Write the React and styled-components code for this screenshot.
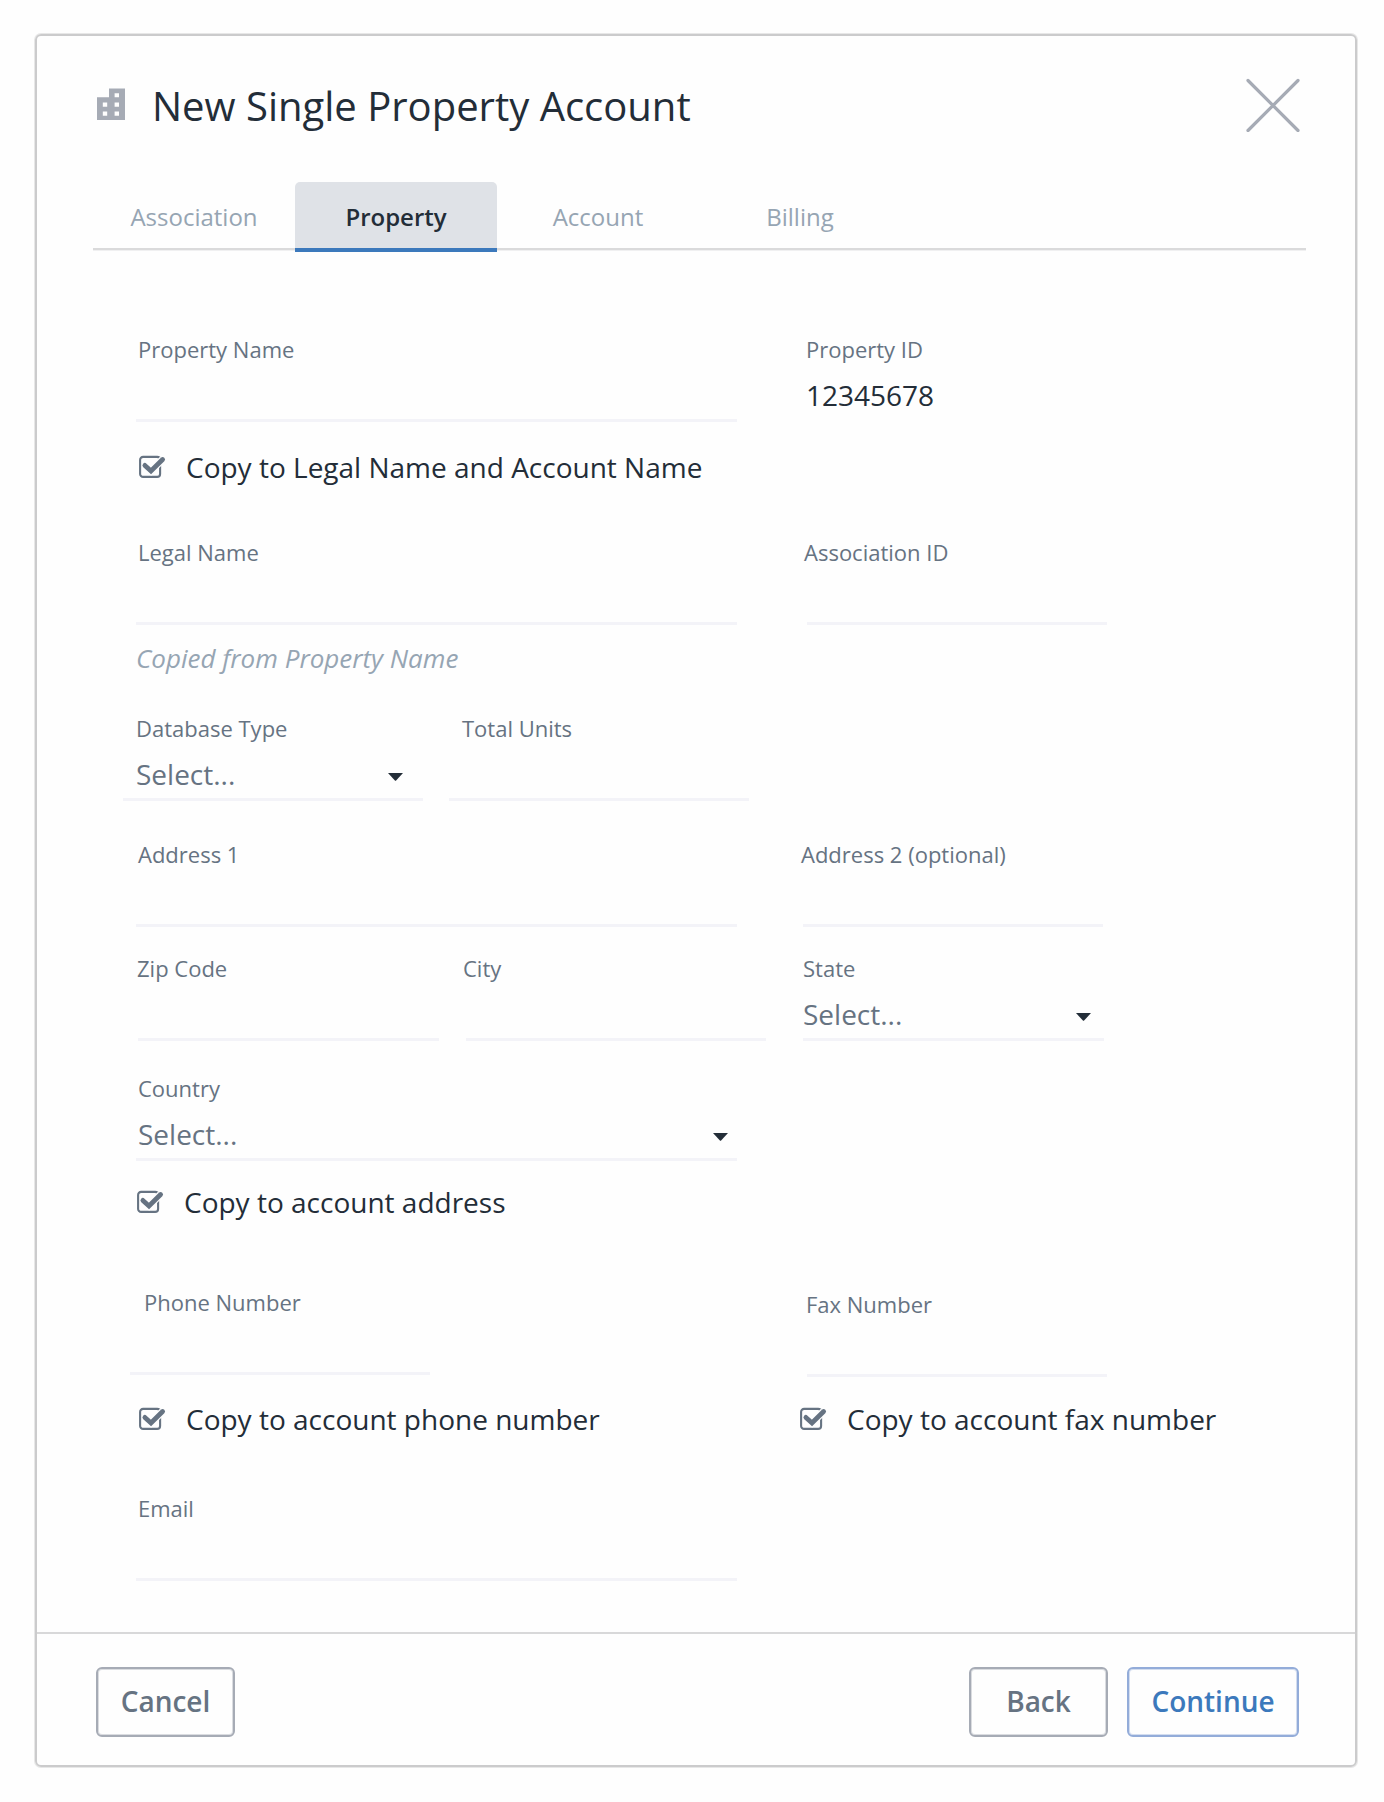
import React, { useState } from "react";
import styled, { createGlobalStyle, css } from "styled-components";

const ink = "#232d38";
const slate = "#667382";
const mist = "#96a5b3";
const steel = "#a6abb5";
const blue = "#3c79bc";
const rule = "#f3f3f8";

const GlobalStyle = createGlobalStyle`
  *, *::before, *::after { box-sizing: border-box; }
  body { margin: 0; background: #fefefe; font-family: "Open Sans", "Noto Sans", sans-serif; color: ${ink}; }
  button, input { font: inherit; color: inherit; }
`;

const Page = styled.div`
  min-height: 1802px;
  padding: 34px 27px 35px 35px;
`;

const Dialog = styled.section`
  display: flex;
  flex-direction: column;
  height: 1733px;
  border: 2px solid #cbcbcc;
  border-radius: 6px;
  box-shadow: 0 0 0 1px rgba(203, 203, 204, 0.45);
`;

const Header = styled.header`
  display: flex;
  align-items: flex-start;
  height: 146px;
  padding: 42px 55px 0 60px;
`;

const TitleIcon = styled.svg`
  width: 28px;
  height: 32px;
  margin-top: 10px;
`;

const Title = styled.h1`
  flex: 1;
  margin: 0 0 0 27px;
  font-size: 40px;
  line-height: 55px;
  font-weight: 400;
`;

const CloseButton = styled.button`
  width: 54px;
  height: 54px;
  padding: 0;
  border: 0;
  background: none;
  svg { display: block; }
`;

const Tabs = styled.nav`
  display: flex;
  flex: none;
  height: 70px;
  margin: 0 49px 0 56px;
  background:
    linear-gradient(#dadadb, #dadadb) 0 66px / 100% 2px no-repeat,
    linear-gradient(#f0f0f1, #f0f0f1) 0 68px / 100% 1px no-repeat;
`;

const Tab = styled.button`
  flex: none;
  width: 202px;
  height: 70px;
  padding: 0 0 1px;
  border: 0;
  background: none;
  font-size: 24px;
  line-height: 33px;
  color: ${mist};
  ${(p) =>
    p.$active &&
    css`
      padding: 3px 0 0;
      border-bottom: 4px solid ${blue};
      border-radius: 5px 5px 0 0;
      background: #dfe2e7;
      color: ${ink};
      font-weight: 600;
    `}
`;

const Form = styled.form`
  display: flex;
  flex-direction: column;
  flex: 1;
  padding: 82px 0 0 99px;
`;

const Row = styled.div`
  display: flex;
  align-items: flex-start;
  margin-bottom: ${(p) => p.$after || 0}px;
`;

const FieldBox = styled.label`
  display: flex;
  flex-direction: column;
  width: ${(p) => p.$width}px;
  height: 88px;
  margin-left: ${(p) => p.$before || 0}px;
  margin-top: ${(p) => p.$drop || 0}px;
  margin-bottom: ${(p) => -(p.$drop || 0)}px;
  border-bottom: 3px solid ${(p) => (p.$plain ? "transparent" : rule)};
`;

const Label = styled.span`
  margin-left: ${(p) => p.$indent || 0}px;
  font-size: 22px;
  line-height: 30px;
  color: ${slate};
  white-space: nowrap;
`;

const Input = styled.input`
  width: 100%;
  height: 55px;
  padding: 12px 0 5px;
  border: 0;
  outline: 0;
  background: none;
  font-size: 28px;
  line-height: 38px;
`;

const Value = styled.span`
  display: flex;
  justify-content: space-between;
  padding: 12px 12px 5px ${(p) => p.$indent || 0}px;
  font-size: 28px;
  line-height: 38px;
  color: ${(p) => (p.$muted ? slate : ink)};
`;

const Caret = styled.svg`
  width: 15px;
  height: 8px;
  margin-top: 18px;
  margin-right: ${(p) => p.$inset || 0}px;
`;

const Hint = styled.p`
  margin: 0 0 37px;
  padding-top: 15px;
  font-size: 26px;
  line-height: 36px;
  font-style: italic;
  color: ${mist};
`;

const Check = styled.button`
  display: flex;
  align-items: flex-start;
  gap: 20px;
  margin-left: ${(p) => p.$before || 0}px;
  width: ${(p) => p.$width || "auto"};
  padding: 0;
  border: 0;
  background: none;
  font-size: 28px;
  line-height: 38px;
  color: ${ink};
  white-space: nowrap;
  svg { flex: none; margin-top: 7px; }
`;

const Footer = styled.footer`
  display: flex;
  gap: 19px;
  height: 133px;
  padding: 33px 56px 0 59px;
  border-top: 2px solid #d8d8d9;
`;

const Button = styled.button`
  width: ${(p) => (p.$primary ? 172 : 139)}px;
  height: 70px;
  padding: 0 0 2px;
  border: 2px solid ${(p) => (p.$primary ? "#93acd9" : steel)};
  border-radius: 6px;
  box-shadow: inset 0 0 0 1px ${(p) => (p.$primary ? "rgba(147,172,217,.4)" : "rgba(166,171,181,.4)")};
  background: none;
  font-size: 28px;
  line-height: 38px;
  font-weight: 600;
  color: ${(p) => (p.$primary ? blue : slate)};
`;

const Spacer = styled.span`
  flex: 1;
`;

function BuildingIcon() {
  return (
    <TitleIcon viewBox="0 0 28 32" fill={steel}>
      <path
        fillRule="evenodd"
        d="M12 0.4H28V32H0V9.2H12ZM17.6 5.2V9.2H22V5.2ZM17.6 14.6V18.8H22V14.6ZM17.6 23.6V27.8H22V23.6ZM5.8 14.6V18.8H10.2V14.6ZM5.8 23.6V27.8H10.2V23.6Z"
      />
    </TitleIcon>
  );
}

function Checkbox({ children, ...rest }) {
  const [on, setOn] = useState(true);
  return (
    <Check type="button" role="checkbox" aria-checked={on} onClick={() => setOn(!on)} {...rest}>
      <svg width="27" height="23" viewBox="0 0 27 23" fill="none">
        <rect x="1.1" y="1.9" width="20" height="20" rx="3" stroke={slate} strokeWidth="2.1" />
        {on && (
          <>
            <path d="M6 10.6L12 15.8L23.6 4.4" stroke="#fefefe" strokeWidth="7.4" />
            <path d="M5.9 10.4L12 16L23.6 4.5" stroke={slate} strokeWidth="4.8" strokeLinecap="round" />
          </>
        )}
      </svg>
      {children}
    </Check>
  );
}

function TextField({ label, indent, ...box }) {
  return (
    <FieldBox {...box}>
      <Label $indent={indent}>{label}</Label>
      <Input />
    </FieldBox>
  );
}

function SelectField({ label, indent, inset, ...box }) {
  return (
    <FieldBox {...box}>
      <Label $indent={indent}>{label}</Label>
      <Value $muted $indent={indent}>
        Select...
        <Caret $inset={inset} viewBox="0 0 15 8" fill={ink}>
          <path d="M0 0H15L8.1 7.6Q7.5 8 6.9 7.6Z" />
        </Caret>
      </Value>
    </FieldBox>
  );
}

export default function App() {
  const [tab, setTab] = useState("Property");
  return (
    <>
      <GlobalStyle />
      <Page>
        <Dialog>
          <Header>
            <BuildingIcon />
            <Title>New Single Property Account</Title>
            <CloseButton aria-label="Close">
              <svg width="54" height="54" viewBox="0 0 54 54" stroke={steel} strokeWidth="3.2" strokeLinecap="round">
                <path d="M2 2.5L52 52.5M52 2.5L2 52.5" />
              </svg>
            </CloseButton>
          </Header>
          <Tabs>
            {["Association", "Property", "Account", "Billing"].map((name) => (
              <Tab key={name} $active={name === tab} onClick={() => setTab(name)}>
                {name}
              </Tab>
            ))}
          </Tabs>
          <Form>
            <Row $after={26}>
              <TextField label="Property Name" $width={601} indent={2} />
              <FieldBox as="div" $plain $width={300} $before={69}>
                <Label>Property ID</Label>
                <Value>12345678</Value>
              </FieldBox>
            </Row>
            <Row $after={51}>
              <Checkbox $before={3}>Copy to Legal Name and Account Name</Checkbox>
            </Row>
            <Row>
              <TextField label="Legal Name" $width={601} indent={2} />
              <TextField label="Association ID" $width={300} $before={70} indent={-3} />
            </Row>
            <Hint>Copied from Property Name</Hint>
            <Row $after={38}>
              <SelectField label="Database Type" $width={300} $before={-13} indent={13} inset={8} />
              <TextField label="Total Units" $width={300} $before={26} indent={13} />
            </Row>
            <Row $after={26}>
              <TextField label="Address 1" $width={601} indent={2} />
              <TextField label="Address 2 (optional)" $width={300} $before={66} indent={-2} />
            </Row>
            <Row $after={32}>
              <TextField label="Zip Code" $width={301} $before={2} indent={-1} />
              <TextField label="City" $width={300} $before={27} indent={-3} />
              <SelectField label="State" $width={301} $before={37} inset={1} />
            </Row>
            <Row $after={22}>
              <SelectField label="Country" $width={601} indent={2} inset={-3} />
            </Row>
            <Row $after={66}>
              <Checkbox $before={1}>Copy to account address</Checkbox>
            </Row>
            <Row $after={25}>
              <TextField label="Phone Number" $width={300} $before={-6} indent={14} />
              <TextField label="Fax Number" $width={300} $before={377} $drop={2} indent={-1} />
            </Row>
            <Row $after={55}>
              <Checkbox $before={3} $width="661px">Copy to account phone number</Checkbox>
              <Checkbox>Copy to account fax number</Checkbox>
            </Row>
            <Row>
              <TextField label="Email" $width={601} indent={2} />
            </Row>
          </Form>
          <Footer>
            <Button>Cancel</Button>
            <Spacer />
            <Button>Back</Button>
            <Button $primary>Continue</Button>
          </Footer>
        </Dialog>
      </Page>
    </>
  );
}
